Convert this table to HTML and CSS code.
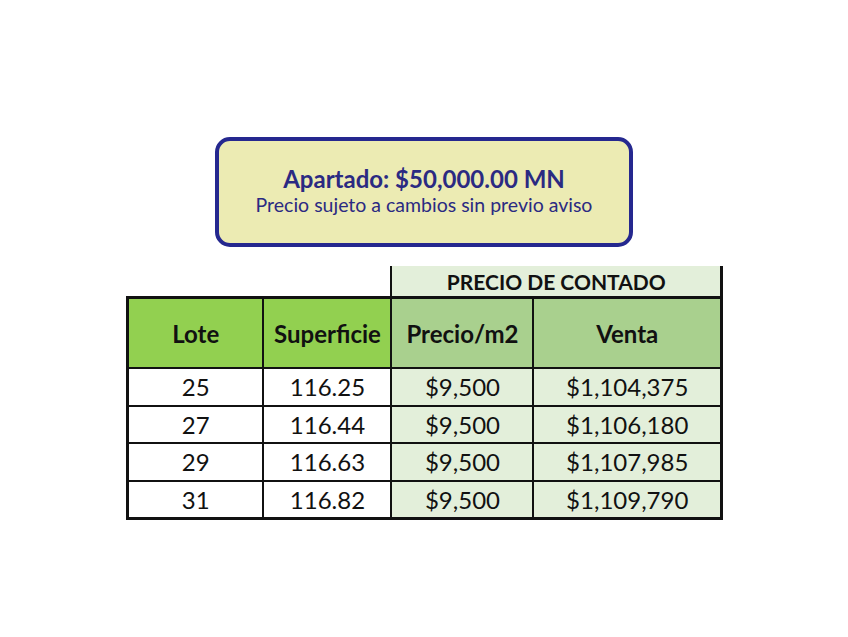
FILE: index.html
```html
<!DOCTYPE html>
<html lang="es">
<head>
<meta charset="utf-8">
<title>Precios</title>
<link rel="stylesheet" href="styles.css">
</head>
<body>
<main class="page">
  <section class="notice">
    <p class="notice-title">Apartado: $50,000.00 MN</p>
    <p class="notice-sub">Precio sujeto a cambios sin previo aviso</p>
  </section>
  <table class="prices">
    <colgroup>
      <col class="c-lote">
      <col class="c-sup">
      <col class="c-precio">
      <col class="c-venta">
    </colgroup>
    <thead>
      <tr class="group-row">
        <th class="blank" colspan="2"></th>
        <th class="group" colspan="2">PRECIO DE CONTADO</th>
      </tr>
      <tr class="head-row">
        <th class="h-green">Lote</th>
        <th class="h-green">Superficie</th>
        <th class="h-sage">Precio/m2</th>
        <th class="h-sage">Venta</th>
      </tr>
    </thead>
    <tbody>
      <tr><td>25</td><td>116.25</td><td class="light">$9,500</td><td class="light">$1,104,375</td></tr>
      <tr><td>27</td><td>116.44</td><td class="light">$9,500</td><td class="light">$1,106,180</td></tr>
      <tr><td>29</td><td>116.63</td><td class="light">$9,500</td><td class="light">$1,107,985</td></tr>
      <tr><td>31</td><td>116.82</td><td class="light">$9,500</td><td class="light">$1,109,790</td></tr>
    </tbody>
  </table>
</main>
</body>
</html>
```
FILE: styles.css
```css
html, body {
  margin: 0;
  padding: 0;
  background: #ffffff;
}

.page {
  display: flex;
  flex-direction: column;
  align-items: center;
  padding-top: 137px;
  font-family: Lato, "Open Sans", sans-serif;
}

.notice {
  box-sizing: border-box;
  width: 418px;
  height: 110px;
  border: 4px solid #25288f;
  border-radius: 15px;
  background: #ecebb3;
  color: #2b2a82;
  display: flex;
  flex-direction: column;
  align-items: center;
  justify-content: center;
  padding-bottom: 4px;
  margin-bottom: 19px;
}

.notice p {
  margin: 0;
}

.notice-title {
  font-weight: 700;
  font-size: 24px;
  line-height: 29px;
  margin-top: 3px;
}

.notice-sub {
  font-size: 19.5px;
  line-height: 24px;
  margin-top: 3px;
}

.prices {
  border-collapse: collapse;
  table-layout: fixed;
  width: 594px;
  margin-left: 1px;
  color: #111;
}

.c-lote { width: 136px; }
.c-sup { width: 128px; }
.c-precio { width: 142px; }
.c-venta { width: 188px; }

.prices th,
.prices td {
  padding: 0;
  text-align: center;
  border: 2px solid #111;
}

.group-row th.blank {
  border: none;
  border-bottom: 3px solid #111;
  background: #fff;
}

.group-row th.group {
  height: 30px;
  background: #e3efda;
  border-top: none;
  border-left: 2px solid #111;
  border-right: 3px solid #111;
  font-size: 21px;
  font-weight: 700;
}

.head-row th {
  height: 68px;
  font-size: 24px;
  font-weight: 700;
}

.head-row th:first-child { border-left: 3px solid #111; }
.head-row th:last-child { border-right: 3px solid #111; }
.head-row th { border-top: 3px solid #111; }

.h-green { background: #92d050; }
.h-sage { background: #a9d08e; }

.prices td {
  height: 34.5px;
  font-size: 24px;
  line-height: 28px;
  padding-top: 1px;
  background: #fff;
}

.prices td.light { background: #e3efda; }

.prices tbody td:first-child { border-left: 3px solid #111; }
.prices tbody td:last-child { border-right: 3px solid #111; }
.prices tbody tr:last-child td { border-bottom: 3px solid #111; }
```
